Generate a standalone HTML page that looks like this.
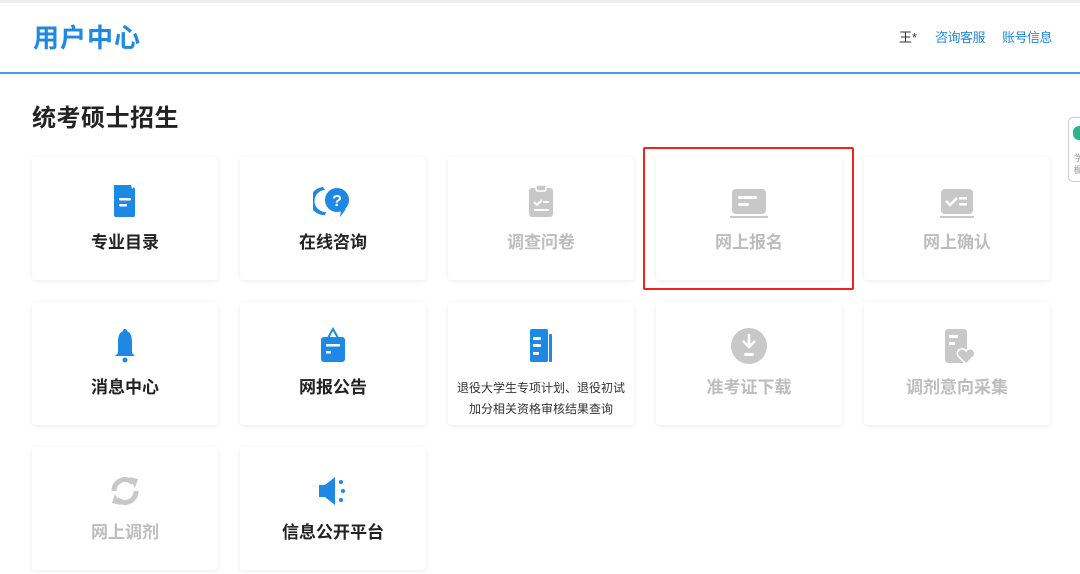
<!DOCTYPE html>
<html><head><meta charset="utf-8"><style>
*{margin:0;padding:0;box-sizing:border-box}
body{width:1080px;height:574px;overflow:hidden;background:#fff;font-family:"Liberation Sans","Noto Sans CJK SC",sans-serif;position:relative}
.top{position:absolute;left:0;top:0;width:1080px;height:3px;background:#eceef1}
.hd{position:absolute;left:0;top:72px;width:1080px;height:2px;background:#4a9be6}
.logo{position:absolute;left:33px;top:21px;font-size:26px;font-weight:bold;color:#1e88e5;line-height:34px;letter-spacing:1px}
.nav{position:absolute;top:29px;font-size:13px;line-height:18px}
.sec{position:absolute;left:32px;top:103px;font-size:24px;font-weight:bold;color:#222;line-height:32px;letter-spacing:0.5px}
.card{position:absolute;width:186px;height:123px;background:#fff;border-radius:3px;box-shadow:0 1px 5px rgba(0,0,0,.08)}
.card svg{position:absolute;left:73px;top:24px;width:40px;height:40px}
.card .t{position:absolute;left:0;right:0;top:75px;text-align:center;font-size:17px;font-weight:bold;line-height:22px;color:#222}
.card.g .t{color:#bdbdbd}
.card .s{position:absolute;left:0;right:0;top:76px;text-align:center;font-size:12px;line-height:21px;color:#333}
.red{position:absolute;left:643px;top:147px;width:211px;height:143px;border:2px solid #f2231d;border-radius:2px}
.wid{position:absolute;left:1068px;top:117px;width:20px;height:65px;border:1px solid #ccc;border-radius:5px;background:#fff}
</style></head><body>
<div class="top"></div>
<div class="logo">用户中心</div>
<div class="nav" style="left:899px;color:#333">王*</div>
<div class="nav" style="left:935px;color:#1e88e5;letter-spacing:-0.5px">咨询客服</div>
<div class="nav" style="left:1002px;color:#1e88e5;letter-spacing:-0.5px">账号信息</div>
<div class="hd"></div>
<div class="sec">统考硕士招生</div>
<div class="wid"><div style="position:absolute;left:4px;top:8px;width:12px;height:14px;border-radius:6px;background:#2bb58a"></div><div style="position:absolute;left:5px;top:34px;font-size:9px;color:#999;line-height:12px">学<br>橱</div></div>

<div class="card" style="left:32px;top:157px"><svg viewBox="0 0 40 40"><path d="M9 4h17l1 4 2-2 1 2V34a2 2 0 0 1-2 2H11a2 2 0 0 1-2-2z" fill="#1e88e5"/><rect x="14" y="17" width="12" height="2.5" rx="1" fill="#fff"/><rect x="14" y="23" width="8" height="2.5" rx="1" fill="#fff"/></svg><div class="t">专业目录</div></div>
<div class="card" style="left:240px;top:157px"><svg viewBox="0 0 40 40"><path d="M10 6a14 14 0 0 0 2 28l1-3a11 11 0 0 1-1-22z" fill="#1e88e5"/><circle cx="24" cy="19" r="12" fill="#1e88e5"/><path d="M28 29l-1 7 6-8z" fill="#1e88e5"/><text x="24" y="25" text-anchor="middle" font-size="16" font-weight="bold" fill="#fff" font-family="Liberation Sans">?</text></svg><div class="t">在线咨询</div></div>
<div class="card g" style="left:448px;top:157px"><svg viewBox="0 0 40 40"><rect x="8" y="7" width="24" height="29" rx="3" fill="#c8c8c8"/><rect x="15" y="4" width="10" height="6" rx="2" fill="#c8c8c8" stroke="#fff" stroke-width="1.5"/><path d="M13 21l3 3 5-5" stroke="#fff" stroke-width="2" fill="none"/><rect x="22" y="20" width="6" height="2" fill="#fff"/><rect x="13" y="28" width="15" height="2" fill="#fff"/></svg><div class="t">调查问卷</div></div>
<div class="card g" style="left:656px;top:157px"><svg viewBox="0 0 40 40"><rect x="3" y="8" width="34" height="25" rx="4" fill="#c8c8c8"/><rect x="1" y="35" width="38" height="2" fill="#c8c8c8"/><rect x="9" y="15" width="19" height="3" rx="1.5" fill="#fff"/><rect x="9" y="22" width="11" height="3" rx="1.5" fill="#fff"/></svg><div class="t">网上报名</div></div>
<div class="card g" style="left:864px;top:157px"><svg viewBox="0 0 40 40"><rect x="4" y="8" width="32" height="25" rx="4" fill="#c8c8c8"/><rect x="3" y="35" width="34" height="2" fill="#c8c8c8"/><path d="M9 20l4 4 7-7" stroke="#fff" stroke-width="2.5" fill="none"/><rect x="22" y="16" width="8" height="2.5" fill="#fff"/><rect x="22" y="22" width="8" height="2.5" fill="#fff"/></svg><div class="t">网上确认</div></div>

<div class="card" style="left:32px;top:302px"><svg viewBox="0 0 40 40"><circle cx="20" cy="5" r="2" fill="#1e88e5"/><path d="M20 5c-6 0-7 6-7 12v10l-3 3h20l-3-3V17c0-6-1-12-7-12z" fill="#1e88e5"/><circle cx="20" cy="34" r="2.5" fill="#1e88e5"/></svg><div class="t">消息中心</div></div>
<div class="card" style="left:240px;top:302px"><svg viewBox="0 0 40 40"><path d="M20 3l5 9h-10z" fill="none" stroke="#1e88e5" stroke-width="2"/><rect x="8" y="11" width="24" height="25" rx="3" fill="#1e88e5"/><rect x="13" y="18" width="14" height="2.5" fill="#fff"/><rect x="13" y="25" width="5" height="2.5" fill="#fff"/></svg><div class="t">网报公告</div></div>
<div class="card" style="left:448px;top:302px"><svg viewBox="0 0 40 40"><rect x="9" y="3" width="18" height="33" rx="2" fill="#1e88e5"/><rect x="28" y="8" width="3" height="28" rx="1" fill="#1e88e5"/><rect x="12" y="11" width="8" height="3" rx="1" fill="#fff"/><rect x="12" y="18" width="8" height="3" rx="1" fill="#fff"/><rect x="12" y="26" width="6" height="3" rx="1" fill="#fff"/></svg><div class="s">退役大学生专项计划、退役初试<br>加分相关资格审核结果查询</div></div>
<div class="card g" style="left:656px;top:302px"><svg viewBox="0 0 40 40"><circle cx="20" cy="20" r="18" fill="#c8c8c8"/><path d="M20 8v12M14 15l6 6 6-6" stroke="#fff" stroke-width="2.5" fill="none"/><rect x="15" y="27" width="10" height="3" rx="1.5" fill="#fff"/></svg><div class="t">准考证下载</div></div>
<div class="card g" style="left:864px;top:302px"><svg viewBox="0 0 40 40"><rect x="8" y="3" width="22" height="34" rx="3" fill="#c8c8c8"/><rect x="12" y="9" width="9" height="3" fill="#fff"/><rect x="12" y="16" width="6" height="3" fill="#fff"/><path d="M29 38l-8-8a4.5 4.5 0 0 1 8-5 4.5 4.5 0 0 1 8 5z" fill="#c8c8c8" stroke="#fff" stroke-width="1.5"/></svg><div class="t">调剂意向采集</div></div>

<div class="card g" style="left:32px;top:447px"><svg viewBox="0 0 40 40"><path d="M9 20A11 11 0 0 1 28 12" stroke="#c8c8c8" stroke-width="5" fill="none"/><path d="M24 6l9 2-3 9z" fill="#c8c8c8"/><path d="M31 20A11 11 0 0 1 12 28" stroke="#c8c8c8" stroke-width="5" fill="none"/><path d="M16 34l-9-2 3-9z" fill="#c8c8c8"/></svg><div class="t">网上调剂</div></div>
<div class="card" style="left:240px;top:447px"><svg viewBox="0 0 40 40"><rect x="6" y="14" width="6" height="12" fill="#1e88e5"/><path d="M12 14l10-8v28l-10-8z" fill="#1e88e5"/><circle cx="28" cy="11" r="2" fill="#1e88e5"/><circle cx="30" cy="20" r="2" fill="#1e88e5"/><circle cx="28" cy="29" r="2" fill="#1e88e5"/></svg><div class="t">信息公开平台</div></div>

<div class="red"></div>
</body></html>
